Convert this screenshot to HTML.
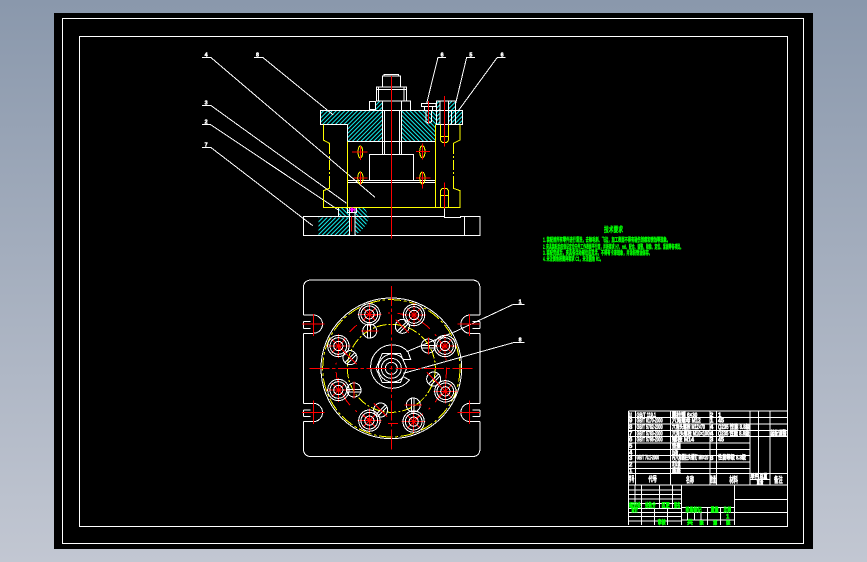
<!DOCTYPE html>
<html><head><meta charset="utf-8"><style>
html,body{margin:0;padding:0;width:867px;height:562px;overflow:hidden;background:linear-gradient(#8a98ac,#c2c7d2)}
svg{position:absolute;left:0;top:0;shape-rendering:crispEdges}
text{font-family:"Liberation Sans","Noto Sans CJK SC",sans-serif;font-weight:700}
.w{fill:none;stroke:#fff;stroke-width:3}
.y{fill:none;stroke:#ff0;stroke-width:3}
.yd{fill:none;stroke:#ff0;stroke-width:3;stroke-dasharray:30 6 6 6}
.r{fill:none;stroke:#f00;stroke-width:3}
.l{fill:none;stroke:#fff;stroke-width:3}
.t{fill:#fff;stroke:#fff;stroke-width:1.6;font-size:18px}
.g{fill:#0f0;stroke:#0f0;stroke-width:1.6;font-size:18px}
.lb{fill:#fff;stroke:#fff;stroke-width:1.5;font-size:16px}
</style></head><body>
<svg width="867" height="562" viewBox="0 0 867 562">
<defs>
<pattern id="h" width="9" height="9" patternUnits="userSpaceOnUse" patternTransform="rotate(45)"><rect width="9" height="9" fill="#000"/><rect width="3" height="9" fill="#1ee"/></pattern>
<pattern id="h2" width="9" height="9" patternUnits="userSpaceOnUse" patternTransform="rotate(-45)"><rect width="9" height="9" fill="#000"/><rect width="3" height="9" fill="#1ee"/></pattern>
<g id="hole"><path d="M-20 -20L20 20M-20 20L20 -20M-36 0H36M0 -36V36" class="r"/><circle r="32" class="w"/><circle r="25" class="w"/><circle r="14" class="w"/></g>
<g id="pin"><circle r="21" class="w"/><path d="M-22 -2H22M-22 6H22" class="w"/><path d="M0 -26V26" class="r"/></g>
<g id="pin2"><circle r="21" class="w"/><path d="M-15 15L15 -15M-9 19L19 -9" class="w"/><path d="M-20 -20L20 20" class="r"/></g>
</defs>
<rect x="54" y="13" width="759" height="536" fill="#000"/>
<rect x="62.5" y="18.5" width="741" height="525" fill="none" stroke="#fff"/>
<rect x="79.5" y="36.5" width="708" height="490" fill="none" stroke="#fff"/>

<!-- Side section view -->
<g transform="translate(190 40) scale(.33333)">
<path d="M391 211H577V304H472V253H391Z" fill="url(#h)"/>
<path d="M634 211H738V304H634Z" fill="url(#h2)"/>
<path d="M738 205H750V253H738ZM776 183H797V253H776ZM785 211H818V253H785ZM555 185H577V211H555ZM738 183H750V205H738Z" fill="url(#h)"/>
<path d="M385 532H478V586H385Z" fill="url(#h)"/>
<path d="M445 502H478V532H445ZM495 502H520Q536 518 535 535Q530 565 495 586Z" fill="url(#h2)"/>
<g class="l">
<path d="M36 52H62L555 472M192 52H218L430 225M768 52H744L710 190M855 52H830L797 190M946 52H922L805 212M36 196H62L470 490M36 254H62L445 510M36 322H62L368 557"/>
</g>
<g class="w">
<path d="M472 253H391V211H818V253H738M472 253V304H738M577 183V343M584 211V343M628 211V343M634 183V343"/>
<path d="M538 421V343H671V421M472 421H736M472 428H736"/>
<path d="M559 183V141H650V183ZM566 141V183M642 141V183M577 141V108H631V141M582 108V103H626V108M559 148H650"/>
<path d="M577 183H662V211M538 185H557V208H538Z"/>
<path d="M740 253V183H797V253H740M750 183V253M776 183V253M785 211V253"/>
<path d="M694 190H738V200H694ZM703 200V212H727V200M708 212V245L716 250L724 245V212"/>
<path d="M445 502V529H395L388 529H340V586H870V529H812V533H763V505M445 529H763M823 529V586M478 502V586M495 502V586M472 502V518H500V502"/>
</g>
<g class="y">
<path d="M472 304V502M736 253V502M400 253V300L418 310V312M418 438V445L400 452V502H810V452L790 445V438M790 312V310L810 300V253"/>
<path d="M751 253V300L757 308H770L776 300V253M751 290H776M751 502V452L757 445H770L776 452V502M751 466H776"/>
<ellipse cx="511" cy="336" rx="7" ry="18"/><ellipse cx="697" cy="335" rx="8" ry="18"/><ellipse cx="511" cy="414" rx="8" ry="18"/><ellipse cx="697" cy="414" rx="8" ry="18"/>
</g>
<path class="yd" d="M418 312V438M790 312V438"/>
<g class="r">
<path d="M486 336H532M511 318V360M678 335H720M697 310V358M490 414H532M511 396V434M678 414H722M697 395V446"/>
<path d="M763 168V320M763 428V505M715 183V250M484 530V575M604 108V595"/>
</g>
<path d="M478 509H496M486 502V516" stroke="#f0f" stroke-width="6" fill="none"/>
<text class="lb" x="44" y="49">4</text><text class="lb" x="198" y="49">8</text><text class="lb" x="752" y="49">6</text><text class="lb" x="838" y="49">5</text><text class="lb" x="932" y="49">6</text><text class="lb" x="44" y="193">3</text><text class="lb" x="44" y="251">2</text><text class="lb" x="44" y="319">7</text>
</g>

<!-- Plan view -->
<g transform="translate(290 270) scale(.33333)">
<g class="l">
<path d="M350 245L495 185L670 103H703M340 310L670 218H703"/>
</g>
<g class="w">
<path d="M40 135V55Q40 30 65 30H545Q570 30 570 55V135M570 155V175M570 190V400M570 420V440M570 455V535Q570 560 545 560H65Q40 560 40 535V455M40 440V420M40 400V190M40 175V155"/>
<path d="M40 135H70A27 27 0 0 1 70 190H40M40 155H62M40 175H62"/>
<path d="M570 135H540A27 27 0 0 0 540 190H570M570 155H548M570 175H548"/>
<path d="M40 400H70A27 27 0 0 1 70 455H40M40 420H62M40 440H62"/>
<path d="M570 400H540A27 27 0 0 0 540 455H570M570 420H548M570 440H548"/>
<circle cx="304" cy="295" r="211"/>
<path d="M354 245A65 65 0 1 0 358 330L340 320A42 42 0 1 1 340 268L362 268Z"/>
<path d="M277 250H331L350 295L331 338H277L258 295Z"/>
<circle cx="304" cy="295" r="30"/><circle cx="304" cy="295" r="18"/>
</g>
<g class="y">
<circle cx="304" cy="295" r="206" stroke-dasharray="40 8 8 8"/>
<circle cx="304" cy="295" r="132" stroke-dasharray="30 6 6 6"/>
</g>
<circle cx="304" cy="295" r="166" class="r" stroke-dasharray="30 22 6 22"/>
<g class="r">
<path d="M36 162H104M70 132V198M36 427H104M70 392V462M502 162H570M538 132V198M502 427H570M538 392V462"/>
<path d="M304 48V540" stroke-dasharray="60 8 10 8"/><path d="M58 295H550" stroke-dasharray="60 8 10 8"/>
</g>
<use href="#hole" x="238" y="133"/><use href="#hole" x="372" y="135"/><use href="#hole" x="465" y="228"/><use href="#hole" x="466" y="364"/><use href="#hole" x="371" y="455"/><use href="#hole" x="238" y="452"/><use href="#hole" x="145" y="360"/><use href="#hole" x="145" y="228"/>
<use href="#pin" x="239" y="183" transform="rotate(90 239 183)"/><use href="#pin2" x="337" y="169"/><use href="#pin" x="415" y="228"/><use href="#pin2" x="431" y="327"/><use href="#pin" x="370" y="405" transform="rotate(90 370 405)"/><use href="#pin2" x="272" y="420"/><use href="#pin" x="192" y="360"/><use href="#pin2" x="180" y="263"/>
<text class="lb" x="686" y="100">1</text><text class="lb" x="686" y="215">8</text>
</g>

<!-- Tech notes -->
<g fill="#0f0" stroke="#0f0" stroke-width=".35" font-size="6">
<text x="604" y="232" font-size="7.5" textLength="19" lengthAdjust="spacingAndGlyphs">技术要求</text>
<text x="543" y="242" textLength="127" lengthAdjust="spacingAndGlyphs">1. 装配前所有零件进行清洗，去除毛刺、飞边，加工表面不得有碰伤划痕和锈蚀等现象。</text>
<text x="543" y="249" textLength="140" lengthAdjust="spacingAndGlyphs">2. 夹具装配后应保证定位元件工作表面平行度，并按要求 H7、m6、配合、调整、检验、定位、紧固等各项目。</text>
<text x="543" y="255" textLength="109" lengthAdjust="spacingAndGlyphs">3. 装配完成后，夹具各活动部位应灵活，不得有卡滞现象，并涂防锈油保存。</text>
<text x="543" y="261" textLength="60" lengthAdjust="spacingAndGlyphs">4. 未注倒角按图样要求 C1，未注圆角 R1。</text>
</g>

<!-- Title block -->
<g transform="translate(620 405) scale(.33333)">
<g class="w">
<path d="M25 18V360M25 18H503M25 38H503M25 57H503M25 76H503M25 95H503M25 114H390M25 133H390M25 152H390M25 171H390M25 190H390M25 206H503M25 240H503"/>
<path d="M46 18V240M151 18V240M270 18V240M290 18V240M390 18V240M415 18V206M450 18V240M390 224H450M415 206V240"/>
<path d="M25 255H185M25 268H185M25 282H185M25 296H185M25 310H185M25 322H185M25 335H185M25 348H185"/>
<path d="M45 240V310M65 240V360M118 240V310M157 240V310M185 240V360M103 310V360M142 310V360"/>
<path d="M185 308H343M185 322H343M185 345H343M262 308V360M302 308V360M202 322V345M223 322V345M243 322V345"/>
<path d="M343 240V360M343 283H503M343 322H503"/>
</g>
<g class="t">
<text x="26" y="36" textLength="10" lengthAdjust="spacingAndGlyphs">10</text><text x="27" y="53">9</text><text x="27" y="72">8</text><text x="27" y="91">7</text><text x="27" y="110">6</text><text x="27" y="129">5</text><text x="27" y="148">4</text><text x="27" y="165">3</text><text x="27" y="184">2</text><text x="27" y="202">1</text>
<text x="50" y="36" textLength="58" lengthAdjust="spacingAndGlyphs">GB/T 119.1</text>
<text x="50" y="53" textLength="78" lengthAdjust="spacingAndGlyphs">GB/T 6170-2000</text>
<text x="50" y="72" textLength="78" lengthAdjust="spacingAndGlyphs">GB/T 5782-2000</text>
<text x="50" y="91" textLength="78" lengthAdjust="spacingAndGlyphs">GB/T 5783-2000</text>
<text x="50" y="110" textLength="78" lengthAdjust="spacingAndGlyphs">GB/T 5786-2000</text>
<text x="50" y="164" textLength="67" lengthAdjust="spacingAndGlyphs">GB/T 70.1-2000</text>
<text x="156" y="36" textLength="76" lengthAdjust="spacingAndGlyphs">圆柱销 6×30</text>
<text x="156" y="53" textLength="86" lengthAdjust="spacingAndGlyphs">六角螺母 M12</text>
<text x="156" y="72" textLength="99" lengthAdjust="spacingAndGlyphs">六角头螺栓 M12×70</text>
<text x="156" y="91" textLength="112" lengthAdjust="spacingAndGlyphs">六角头螺栓 M10×100</text>
<text x="156" y="110" textLength="66" lengthAdjust="spacingAndGlyphs">螺栓 M14</text>
<text x="156" y="129" textLength="26" lengthAdjust="spacingAndGlyphs">垫圈</text>
<text x="156" y="148" textLength="19" lengthAdjust="spacingAndGlyphs">压板</text>
<text x="156" y="164" textLength="109" lengthAdjust="spacingAndGlyphs">内六角圆柱头螺钉 M6×20</text>
<text x="156" y="183" textLength="26" lengthAdjust="spacingAndGlyphs">定位盘</text>
<text x="156" y="202" textLength="26" lengthAdjust="spacingAndGlyphs">底座</text>
<text x="294" y="36">1</text>
<text x="294" y="53" textLength="18" lengthAdjust="spacingAndGlyphs">45</text>
<text x="294" y="72" textLength="96" lengthAdjust="spacingAndGlyphs">Q235 性能 8.8级</text>
<text x="294" y="91" textLength="94" lengthAdjust="spacingAndGlyphs">Q235 性能 8.8级</text>
<text x="294" y="110" textLength="18" lengthAdjust="spacingAndGlyphs">45</text>
<text x="294" y="164" textLength="84" lengthAdjust="spacingAndGlyphs">性能等级 8.8级</text>
<text x="452" y="92" textLength="48" lengthAdjust="spacingAndGlyphs" font-size="20">装配调整</text>
<text x="270" y="36">2</text><text x="270" y="53">1</text><text x="270" y="72">4</text><text x="270" y="91">4</text><text x="270" y="110">3</text><text x="270" y="165">8</text>
<text x="26" y="230" font-size="22" textLength="17" lengthAdjust="spacingAndGlyphs">序号</text>
<text x="85" y="230" font-size="22" textLength="26" lengthAdjust="spacingAndGlyphs">代号</text>
<text x="198" y="232" font-size="24" textLength="24" lengthAdjust="spacingAndGlyphs">名称</text>
<text x="270" y="232" font-size="24" textLength="18" lengthAdjust="spacingAndGlyphs">数量</text>
<text x="328" y="232" font-size="24" textLength="26" lengthAdjust="spacingAndGlyphs">材料</text>
<text x="392" y="221" font-size="18" textLength="50" lengthAdjust="spacingAndGlyphs">单件 总重</text>
<text x="410" y="239" font-size="17" textLength="20" lengthAdjust="spacingAndGlyphs">重量</text>
<text x="462" y="232" font-size="24" textLength="26" lengthAdjust="spacingAndGlyphs">备注</text>
</g>
<g class="g">
<text x="27" y="308" textLength="36" lengthAdjust="spacingAndGlyphs">标记处</text>
<text x="75" y="308" textLength="32" lengthAdjust="spacingAndGlyphs">处数分</text>
<text x="125" y="308" textLength="24" lengthAdjust="spacingAndGlyphs">区更</text>
<text x="162" y="308" textLength="19" lengthAdjust="spacingAndGlyphs">签名</text>
<text x="34" y="321" textLength="20" lengthAdjust="spacingAndGlyphs">设计</text>
<text x="113" y="359" textLength="24" lengthAdjust="spacingAndGlyphs">审核</text>
<text x="197" y="321" textLength="48" lengthAdjust="spacingAndGlyphs">阶段标记</text>
<text x="272" y="321" textLength="24" lengthAdjust="spacingAndGlyphs">重量</text>
<text x="311" y="321" textLength="22" lengthAdjust="spacingAndGlyphs">比例</text>
<text x="318" y="340" textLength="10" lengthAdjust="spacingAndGlyphs">1</text>
<text x="201" y="358">共</text><text x="238" y="359" font-size="13">张</text><text x="279" y="359" font-size="13">第</text><text x="318" y="359" font-size="13">张</text>
</g>
</g>
</svg>
</body></html>
